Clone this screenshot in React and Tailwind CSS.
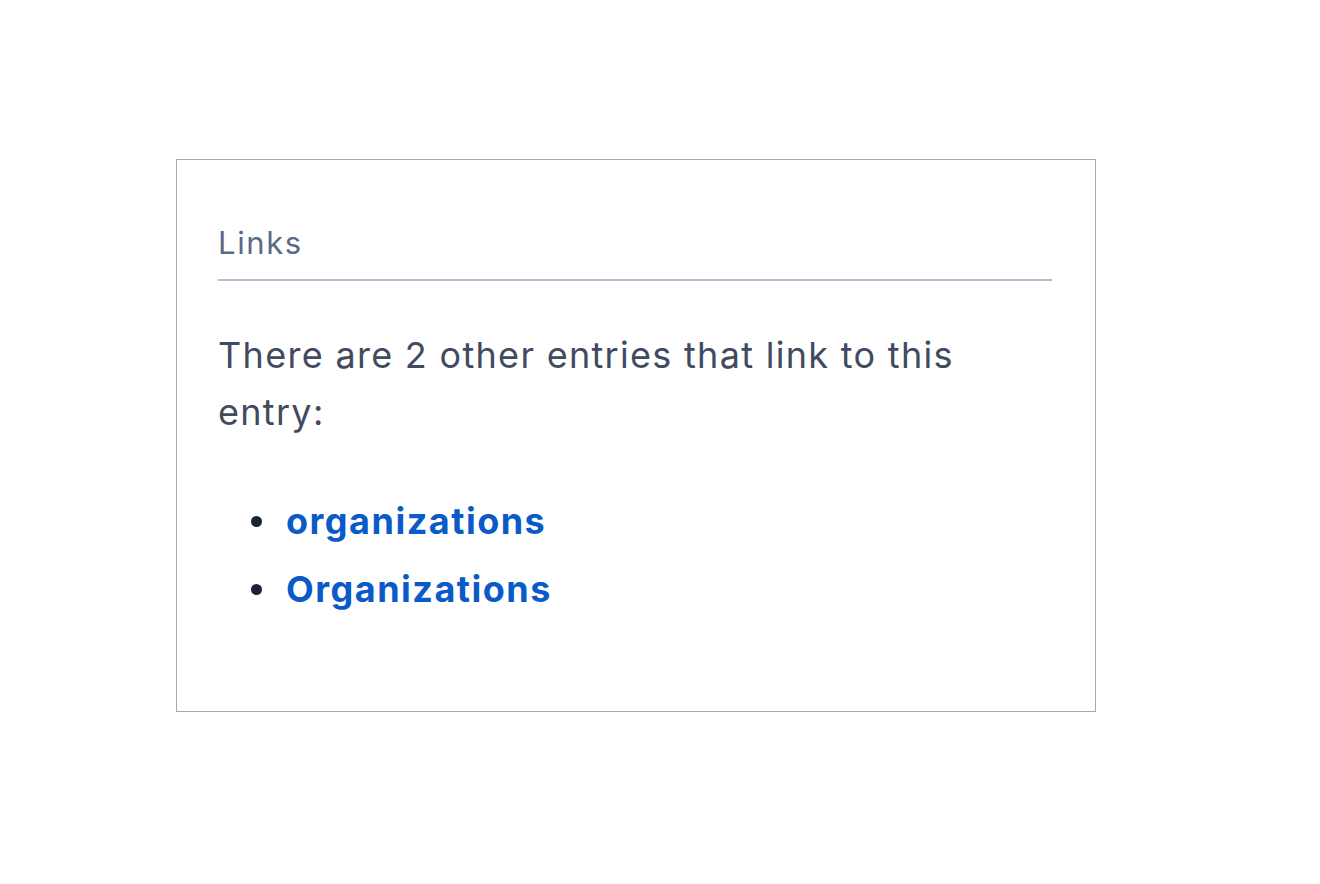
import React from 'react';

const links = ['organizations', 'Organizations'];

const App = () => {
    return (
        <div className="min-h-[884px] bg-white pt-[159px] pl-[176px]" style={{ fontFamily: 'Inter, "Noto Sans", sans-serif' }}>
            <div className="w-[920px] h-[553px] border border-[#a9a9a9] px-[41px] pt-[65px]">
                <div className="mr-[2px] border-b-2 border-[#b3bdcb] pb-[18px]">
                    <h2 className="text-[31px] leading-[36px] tracking-[1.6px] text-[#5c6986] font-normal">Links</h2>
                </div>

                <p className="mt-[46px] text-[36px] leading-[57px] tracking-[1.3px] text-[#414a5e] pr-[60px]">
                    There are 2 other entries that link to this entry:
                </p>

                <ul className="mt-[46px]">
                    {links.map((name) => (
                        <li key={name} className="flex items-center h-[68px]">
                            <span className="ml-[33px] w-[11px] h-[11px] rounded-full bg-[#1b2336]"></span>
                            <a href="#" className="ml-[24px] text-[36px] leading-[68px] tracking-[1.5px] font-bold text-[#0a5ac8]">
                                {name}
                            </a>
                        </li>
                    ))}
                </ul>
            </div>
        </div>
    );
};

export default App;
